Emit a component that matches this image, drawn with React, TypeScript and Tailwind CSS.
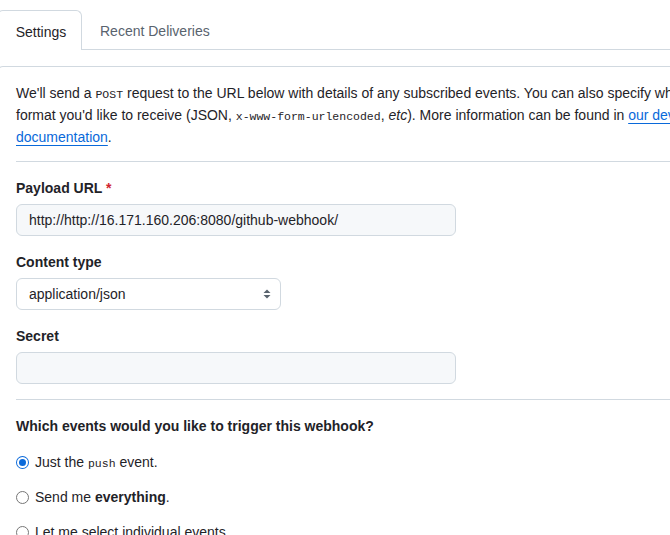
const Radio = ({ checked, children }: { checked?: boolean; children: React.ReactNode }) => (
  <label className="flex h-[21px] items-center gap-[6px]">
    {checked ? (
      <span className="flex h-[13px] w-[13px] items-center justify-center rounded-full bg-[#0969da]">
        <span className="flex h-[11px] w-[11px] items-center justify-center rounded-full bg-white">
          <span className="h-[7px] w-[7px] rounded-full bg-[#0969da]" />
        </span>
      </span>
    ) : (
      <span className="h-[13px] w-[13px] rounded-full border border-[#767676] bg-white" />
    )}
    <span>{children}</span>
  </label>
);

export default function App() {
  return (
    <div className="h-[535px] w-[670px] overflow-hidden bg-white font-['Liberation_Sans',sans-serif] text-[14px] text-[#1f2328]">
      <div className="-ml-[3px] w-[760px] pt-[10px]">
        <nav className="flex items-end">
          <div className="flex h-[40px] w-[85px] items-center justify-center rounded-t-[6px] border border-b-0 border-[#d1d9e0] pt-[3px] pl-[3px]">
            Settings
          </div>
          <div className="flex h-[40px] flex-1 items-center border-b border-[#d1d9e0] pt-[3px] pl-[18px] text-[#59636e]">
            Recent Deliveries
          </div>
        </nav>

        <section className="mt-[16px] rounded-t-[6px] border border-b-0 border-[#d1d9e0] pl-[18px] pt-[16px]">
          <p className="whitespace-nowrap leading-[21px]">
            We'll send a <code className="font-['Liberation_Mono',monospace] text-[11.5px]">POST</code> request to the
            URL below with details of any subscribed events. You can also specify which data
            <br />
            format you'd like to receive (JSON,{" "}
            <code className="font-['Liberation_Mono',monospace] text-[11.5px]">x-www-form-urlencoded</code>,{" "}
            <em>etc</em>). More information can be found in{" "}
            <a className="text-[#0969da] underline underline-offset-[3px]">our developer</a>
            <br />
            <a className="text-[#0969da] underline underline-offset-[3px]">documentation</a>.
          </p>

          <div className="mt-[13px] border-t border-[#d1d9e0] pt-[16px]">
            <div className="font-semibold leading-[21px]">
              Payload URL <span className="text-[#d1242f]">*</span>
            </div>
            <div className="mt-[5px] flex h-[32px] w-[440px] items-center rounded-[6px] border border-[#d1d9e0] bg-[#f6f8fa] pl-[12px]">
              http://http://16.171.160.206:8080/github-webhook/
            </div>

            <div className="mt-[16px] font-semibold leading-[21px]">Content type</div>
            <div className="mt-[5px] flex h-[32px] w-[265px] items-center justify-between rounded-[6px] border border-[#d1d9e0] bg-white pl-[12px] pr-[9px]">
              <span>application/json</span>
              <svg width="8" height="12" viewBox="0 0 8 12" fill="#59636e">
                <path d="M4 1.5 7.5 5h-7z" />
                <path d="M4 10.5 7.5 7h-7z" />
              </svg>
            </div>

            <div className="mt-[16px] font-semibold leading-[21px]">Secret</div>
            <div className="mt-[5px] h-[32px] w-[440px] rounded-[6px] border border-[#d1d9e0] bg-[#f6f8fa]" />
          </div>

          <div className="mt-[15px] border-t border-[#d1d9e0] pt-[16px]">
            <div className="font-semibold leading-[21px]">Which events would you like to trigger this webhook?</div>
            <div className="mt-[15px] flex flex-col gap-[14px]">
              <Radio checked>
                Just the <code className="font-['Liberation_Mono',monospace] text-[11.5px]">push</code> event.
              </Radio>
              <Radio>
                Send me <strong className="font-semibold">everything</strong>.
              </Radio>
              <Radio>Let me select individual events.</Radio>
            </div>
          </div>
        </section>
      </div>
    </div>
  );
}
